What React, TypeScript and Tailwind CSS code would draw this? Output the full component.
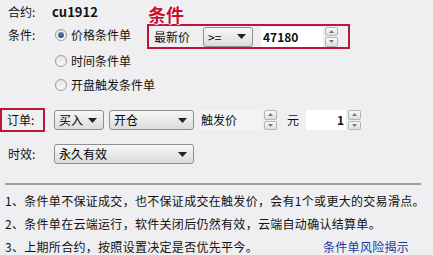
const font = { fontFamily: '"Noto Sans CJK SC", "Liberation Sans", sans-serif' };

function Arrow() {
	return (
		<svg width="9" height="5" viewBox="0 0 9 5" className="shrink-0">
			<path d="M0 0 H9 L4.5 5 Z" fill="#222" />
		</svg>
	);
}

function Select({ label, w }: { label: string; w: string }) {
	return (
		<div
			className={`flex h-[20px] ${w} items-center justify-between rounded-[3px] border border-[#8e8f8f] bg-gradient-to-b from-[#f7f7f7] to-[#dcdcdc] pl-[4px] pr-[6px] text-[12px] text-black`}
		>
			<span>{label}</span>
			<Arrow />
		</div>
	);
}

function Spinner() {
	return (
		<div className="ml-[2px] flex h-[20px] w-[13px] flex-col gap-[1px]">
			<div className="flex flex-1 items-center justify-center rounded-[2px] border border-[#b5b5b5] bg-gradient-to-b from-[#fafafa] to-[#dedede]">
				<svg width="5" height="3" viewBox="0 0 5 3">
					<path d="M0 3 L2.5 0 L5 3 Z" fill="#6a7a8a" />
				</svg>
			</div>
			<div className="flex flex-1 items-center justify-center rounded-[2px] border border-[#b5b5b5] bg-gradient-to-b from-[#fafafa] to-[#dedede]">
				<svg width="5" height="3" viewBox="0 0 5 3">
					<path d="M0 0 L2.5 3 L5 0 Z" fill="#6a7a8a" />
				</svg>
			</div>
		</div>
	);
}

function Radio({ on, label }: { on?: boolean; label: string }) {
	return (
		<div className="flex items-center gap-[4px]">
			<div className="flex h-[12px] w-[12px] items-center justify-center rounded-full border border-[#9a9a9a] bg-gradient-to-b from-[#e4e4e4] to-[#fbfbfb]">
				{on && <div className="h-[6px] w-[6px] rounded-full bg-gradient-to-b from-[#5d8ab5] to-[#1f4f80]" />}
			</div>
			<span>{label}</span>
		</div>
	);
}

export default function App() {
	return (
		<div className="h-[255px] w-[433px] overflow-hidden bg-[#efeff1] text-[12px] text-[#111]" style={font}>
			<div className="flex h-[22px] items-center pl-[8px] pt-[2px]">
				<span className="w-[44px]">合约:</span>
				<span className="font-bold text-[13px]">cu1912</span>
			</div>

			<div className="flex">
				<div className="flex w-[135px] shrink-0 flex-col">
					<div className="flex h-[26px] items-center pl-[8px]">
						<span className="w-[47px]">条件:</span>
						<Radio on label="价格条件单" />
					</div>
					<div className="flex h-[25px] items-center pl-[55px]">
						<Radio label="时间条件单" />
					</div>
					<div className="flex h-[24px] items-center whitespace-nowrap pl-[55px]">
						<Radio label="开盘触发条件单" />
					</div>
				</div>

				<div className="relative ml-[12px] mt-[2px]">
					<div className="absolute left-[1px] top-[-20px] h-[20px] text-[18px] font-bold leading-[20px] text-[#c8102e] [text-shadow:0_0_1px_#fff,0_0_2px_#fff,1px_1px_1px_#fff,-1px_-1px_1px_#fff]">
						条件
					</div>
					<div className="flex h-[25px] w-[203px] items-center border-2 border-[#b8173a] pl-[5px]">
						<span className="w-[49px]">最新价</span>
						<Select label=">=" w="w-[50px]" />
						<div className="ml-[8px] flex h-[20px] w-[62px] items-center bg-white pl-[2px] font-bold">47180</div>
						<Spinner />
					</div>
				</div>
			</div>

			<div className="mt-[11px] flex items-center">
				<div className="flex h-[24px] w-[45px] items-center border-2 border-[#b8173a] pl-[5px]">订单:</div>
				<div className="ml-[9px]">
					<Select label="买入" w="w-[50px]" />
				</div>
				<div className="ml-[5px]">
					<Select label="开仓" w="w-[85px]" />
				</div>
				<div className="ml-[6px] flex h-[20px] w-[62px] items-center bg-[#f4f4f4] pl-[1px]">触发价</div>
				<Spinner />
				<span className="ml-[10px]">元</span>
				<div className="ml-[7px] flex h-[20px] w-[40px] items-center justify-end bg-white pr-[2px] font-bold">1</div>
				<Spinner />
			</div>

			<div className="mt-[12px] flex items-center pl-[8px]">
				<span className="w-[46px]">时效:</span>
				<Select label="永久有效" w="w-[140px]" />
			</div>

			<div className="mx-[5px] mt-[19px] h-[2px] w-[416px] bg-[#9d9d9d]" />

			<div className="pl-[5px] pt-[4px] leading-[23px] tracking-[0.3px]">
				<div>1、条件单不保证成交，也不保证成交在触发价，会有1个或更大的交易滑点。</div>
				<div>2、条件单在云端运行，软件关闭后仍然有效，云端自动确认结算单。</div>
				<div className="flex">
					<span className="w-[318px]">3、上期所合约，按照设置决定是否优先平今。</span>
					<span className="text-[#1a3a9c]">条件单风险揭示</span>
				</div>
			</div>
		</div>
	);
}
